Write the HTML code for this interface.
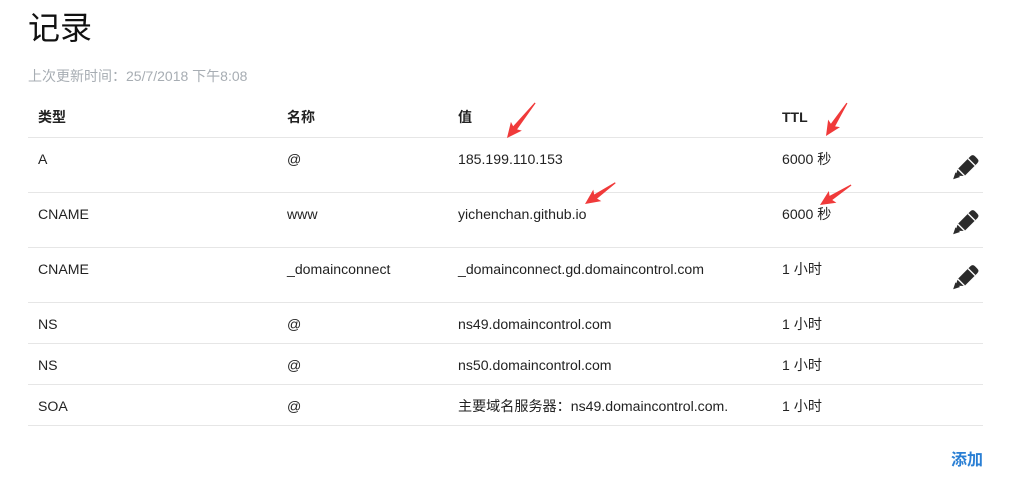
<!DOCTYPE html>
<html><head><meta charset="utf-8"><style>
body{margin:0;width:1028px;height:503px;background:#fff;font-family:"Liberation Sans","Noto Sans CJK SC",sans-serif;color:#222;position:relative;overflow:hidden}
.a{position:absolute;white-space:nowrap;line-height:20px}
h1{position:absolute;left:28px;top:4px;margin:0;font-size:32px;line-height:44px;font-weight:normal;color:#111;font-family:"Noto Sans CJK SC",sans-serif}
.sub{left:28px;top:66px;font-size:14px;color:#a7adb3}
.line{position:absolute;left:28px;width:955px;height:1px;background:#e6e6e6}
.t{font-size:14.1px;color:#222}
.h{font-size:14px;font-weight:bold;color:#222}
.add{left:951px;top:451px;font-size:16px;font-weight:bold;color:#2a7fd4}
</style></head><body>
<h1>记录</h1>
<div class="a sub">上次更新时间：25/7/2018 下午8:08</div>
<div class="a h" style="left:38px;top:107px">类型</div>
<div class="a h" style="left:287px;top:107px">名称</div>
<div class="a h" style="left:458px;top:107px">值</div>
<div class="a h" style="left:782px;top:107px">TTL</div>
<div class="line" style="top:137px"></div>
<div class="line" style="top:192px"></div>
<div class="line" style="top:247px"></div>
<div class="line" style="top:302px"></div>
<div class="line" style="top:343px"></div>
<div class="line" style="top:384px"></div>
<div class="line" style="top:425px"></div>

<div class="a t" style="left:38px;top:149px">A</div><div class="a t" style="left:287px;top:149px">@</div><div class="a t" style="left:458px;top:149px">185.199.110.153</div><div class="a t" style="left:782px;top:149px">6000 秒</div>
<div class="a t" style="left:38px;top:204px">CNAME</div><div class="a t" style="left:287px;top:204px">www</div><div class="a t" style="left:458px;top:204px">yichenchan.github.io</div><div class="a t" style="left:782px;top:204px">6000 秒</div>
<div class="a t" style="left:38px;top:259px">CNAME</div><div class="a t" style="left:287px;top:259px">_domainconnect</div><div class="a t" style="left:458px;top:259px">_domainconnect.gd.domaincontrol.com</div><div class="a t" style="left:782px;top:259px">1 小时</div>
<div class="a t" style="left:38px;top:314px">NS</div><div class="a t" style="left:287px;top:314px">@</div><div class="a t" style="left:458px;top:314px">ns49.domaincontrol.com</div><div class="a t" style="left:782px;top:314px">1 小时</div>
<div class="a t" style="left:38px;top:355px">NS</div><div class="a t" style="left:287px;top:355px">@</div><div class="a t" style="left:458px;top:355px">ns50.domaincontrol.com</div><div class="a t" style="left:782px;top:355px">1 小时</div>
<div class="a t" style="left:38px;top:396px">SOA</div><div class="a t" style="left:287px;top:396px">@</div><div class="a t" style="left:458px;top:396px">主要域名服务器：ns49.domaincontrol.com.</div><div class="a t" style="left:782px;top:396px">1 小时</div>
<div class="a add">添加</div>

<svg width="1028" height="503" style="position:absolute;left:0;top:0">
<defs>
<g id="pen"><path d="M3,19 L5,13 L16,2 Q18,0 20,2 L22,4 Q24,6 22,8 L11,19 Z" fill="#2b2b2b"/><path d="M14,4 L20,10" stroke="#fff" stroke-width="1.2"/><path d="M5,13 L11,19" stroke="#fff" stroke-width="1.2"/><path d="M1,22 L3,16 L7,20 Z" fill="#2b2b2b"/></g>
</defs>
<use href="#pen" transform="translate(952,154) scale(1.15)"/>
<use href="#pen" transform="translate(952,209) scale(1.15)"/>
<use href="#pen" transform="translate(952,264) scale(1.15)"/>
<g fill="#f03a3a">
<polygon transform="translate(507,138) rotate(-51.3)" points="0,0 15,-7 13,-2.5 45,-0.6 45,0.6 13,2.5 15,7"/>
<polygon transform="translate(585,204) rotate(-35)" points="0,0 15,-7 13,-2.5 37,-0.6 37,0.6 13,2.5 15,7"/>
<polygon transform="translate(826,136) rotate(-57.5)" points="0,0 15,-7 13,-2.5 39,-0.6 39,0.6 13,2.5 15,7"/>
<polygon transform="translate(820,205) rotate(-32.8)" points="0,0 15,-7 13,-2.5 37,-0.6 37,0.6 13,2.5 15,7"/>
</g>
</svg>
</body></html>
